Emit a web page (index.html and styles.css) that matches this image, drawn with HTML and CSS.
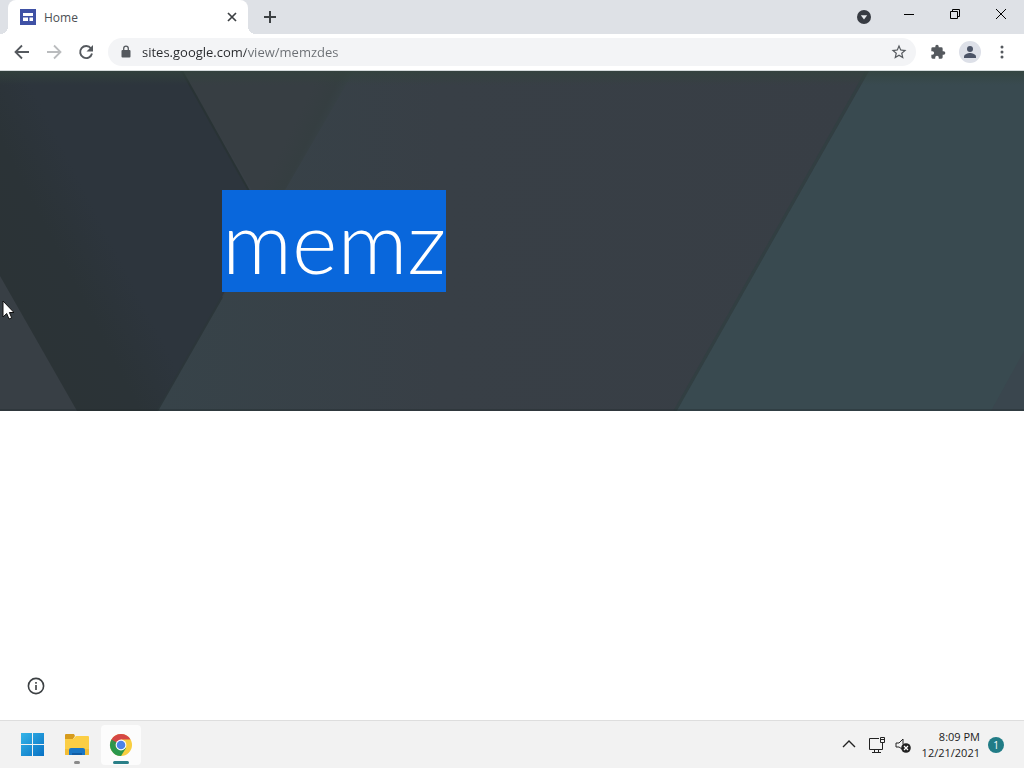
FILE: index.html
```html
<!DOCTYPE html>
<html lang="en">

<head>
    <meta charset="UTF-8">
    <meta name="viewport" content="width=device-width, initial-scale=1.0">
    <title>Home</title>
    <link rel="stylesheet" href="styles.css">
</head>

<body>
    <header class="browser">
        <div class="tab-strip">
            <div class="tab">
                <svg class="favicon" viewBox="0 0 16 16" width="16" height="16">
                    <rect width="16" height="16" fill="#3f51a5" />
                    <path d="M3 4h10v3H3zM3 8.500h5v3.500H3zM9.500 8.500H13v3.500H9.500z" fill="#fff" />
                </svg>
                <span class="tab-title">Home</span>
                <button class="tab-close" aria-label="Close tab">
                    <svg viewBox="0 0 16 16" width="16" height="16">
                        <path d="M4 4l8 8M12 4l-8 8" stroke="#3c4043" stroke-width="1.7" fill="none" />
                    </svg>
                </button>
            </div>
            <button class="new-tab" aria-label="New tab">
                <svg viewBox="0 0 16 16" width="16" height="16">
                    <path d="M8 2v12M2 8h12" stroke="#3c4043" stroke-width="2" fill="none" />
                </svg>
            </button>
            <button class="tab-search" aria-label="Search tabs">
                <svg viewBox="0 0 16 16" width="16" height="16">
                    <circle cx="8" cy="8" r="7" fill="#373b42" />
                    <path d="M4.8 6.2h6.4L8 10.6z" fill="#e8eaed" />
                </svg>
            </button>
            <div class="window-buttons">
                <button aria-label="Minimize">
                    <svg viewBox="0 0 12 12" width="12" height="12">
                        <path d="M1 6.5h10" stroke="#000" fill="none" />
                    </svg>
                </button>
                <button aria-label="Restore">
                    <svg viewBox="0 0 12 12" width="12" height="12">
                        <path d="M1.500 3.500h7v7h-7zM3.500 3.500v-2h7v7h-2" stroke="#000" fill="none" />
                    </svg>
                </button>
                <button aria-label="Close">
                    <svg viewBox="0 0 12 12" width="12" height="12">
                        <path d="M1 1l10 10M11 1L1 11" stroke="#000" fill="none" />
                    </svg>
                </button>
            </div>
        </div>

        <div class="toolbar">
            <button class="tool" aria-label="Back">
                <svg viewBox="0 0 16 16" width="16" height="16">
                    <path d="M15 8H2M8 1.500L1.500 8L8 14.500" stroke="#55595e" stroke-width="1.800" fill="none" />
                </svg>
            </button>
            <button class="tool" aria-label="Forward">
                <svg viewBox="0 0 16 16" width="16" height="16">
                    <path d="M1 8h13M8 1.500L14.500 8L8 14.500" stroke="#babcbe" stroke-width="1.800" fill="none" />
                </svg>
            </button>
            <button class="tool" aria-label="Reload">
                <svg viewBox="0 0 16 16" width="16" height="16">
                    <path d="M13 4.500A6 6 0 1 0 14 9.500" stroke="#55595e" stroke-width="1.900" fill="none" />
                    <path d="M15 1v6.500H8.500z" fill="#55595e" />
                </svg>
            </button>
            <div class="address-bar">
                <svg viewBox="0 0 12 14" width="12" height="14">
                    <rect x="1.500" y="5" width="9" height="7.500" rx="1" fill="#55595e" />
                    <path d="M3.700 6V3.500a2.300 2.300 0 0 1 4.600 0V6" stroke="#55595e" stroke-width="1.300" fill="none" />
                </svg>
                <input class="url" type="text" value="sites.google.com/view/memzdes" aria-label="Address">
                <button class="star" aria-label="Bookmark this page">
                    <svg viewBox="0 0 24 24" width="18" height="18">
                        <path d="M22 9.240l-7.190-.62L12 2 9.190 8.630 2 9.240l5.460 4.730L5.820 21 12 17.270 18.180 21l-1.630-7.030L22 9.240zM12 15.400l-3.760 2.270 1-4.280-3.320-2.880 4.380-.38L12 6.100l1.710 4.040 4.380.38-3.320 2.880 1 4.280L12 15.400z" fill="#55595e" />
                    </svg>
                </button>
            </div>
            <button class="tool" aria-label="Extensions">
                <svg viewBox="0 0 24 24" width="16" height="16">
                    <path d="M20.500 11H19V7a2 2 0 0 0-2-2h-4V3.500a2.500 2.500 0 0 0-5 0V5H4a2 2 0 0 0-2 2v3.800h1.500a2.700 2.700 0 0 1 0 5.400H2V20a2 2 0 0 0 2 2h3.800v-1.500a2.700 2.700 0 0 1 5.400 0V22H17a2 2 0 0 0 2-2v-4h1.500a2.500 2.500 0 0 0 0-5z" fill="#55595e" />
                </svg>
            </button>
            <button class="tool" aria-label="Profile">
                <svg viewBox="0 0 22 22" width="22" height="22">
                    <circle cx="11" cy="11" r="11" fill="#dde0e8" />
                    <circle cx="11" cy="8" r="3" fill="#4c5467" />
                    <path d="M5 17v-1.500c0-2.300 4-3.500 6-3.500s6 1.200 6 3.500V17z" fill="#4c5467" />
                </svg>
            </button>
            <button class="tool" aria-label="Menu">
                <svg viewBox="0 0 16 16" width="16" height="16">
                    <g fill="#55595e">
                        <circle cx="8" cy="3" r="1.500" />
                        <circle cx="8" cy="8" r="1.500" />
                        <circle cx="8" cy="13" r="1.500" />
                    </g>
                </svg>
            </button>
        </div>
    </header>

    <main class="page">
        <section class="hero">
            <svg class="hero-art" viewBox="0 0 1024 340" preserveAspectRatio="none" aria-hidden="true">
                <defs>
                    <linearGradient id="fold" gradientUnits="userSpaceOnUse" x1="20" y1="250" x2="125" y2="196">
                        <stop offset="0" stop-color="#2b3336" />
                        <stop offset="0.550" stop-color="#2b3337" />
                        <stop offset="1" stop-color="#2d353d" />
                    </linearGradient>
                    <linearGradient id="crease" gradientUnits="userSpaceOnUse" x1="295" y1="50" x2="325" y2="65">
                        <stop offset="0" stop-color="#373e43" />
                        <stop offset="0.600" stop-color="#353e41" />
                        <stop offset="1" stop-color="#374247" />
                    </linearGradient>
                    <linearGradient id="panel" x1="0" y1="0" x2="1" y2="0">
                        <stop offset="0" stop-color="#374349" />
                        <stop offset="0.400" stop-color="#383f46" />
                        <stop offset="1" stop-color="#383e45" />
                    </linearGradient>
                    <linearGradient id="top" x1="0" y1="0" x2="0" y2="1">
                        <stop offset="0" stop-color="#33443c" stop-opacity="0.700" />
                        <stop offset="1" stop-color="#33443c" stop-opacity="0" />
                    </linearGradient>
                </defs>
                <rect width="1024" height="340" fill="#383f45" />
                <path d="M157 340L354 0H869L676 340z" fill="url(#panel)" />
                <path d="M182 0H354L270 145H267z" fill="url(#crease)" />
                <path d="M0 0H182L262 145L222 226L157 340H77L0 205z" fill="url(#fold)" />
                <path d="M182 0L249 120" stroke="#293335" stroke-width="2" />
                <path d="M222 226L157 340" stroke="#2c363a" stroke-width="2" />
                <path d="M869 0H1024V340H676z" fill="#394a50" />
                <path d="M867 0L675 340" stroke="#323f42" stroke-width="3" />
                <path d="M1024 280V340H991z" fill="#3a464e" />
                <rect width="1024" height="14" fill="url(#top)" />
                <rect y="338" width="1024" height="2" fill="#20282a" opacity="0.350" />
            </svg>
            <div class="hero-content">
                <h1><span class="selected">memz</span></h1>
            </div>
        </section>
        <button class="info" aria-label="Page details">
            <svg viewBox="0 0 18 18" width="18" height="18">
                <circle cx="9" cy="9" r="7.600" stroke="#3c4043" stroke-width="1.600" fill="none" />
                <path d="M9 8v5M9 5v1.700" stroke="#3c4043" stroke-width="1.600" />
            </svg>
        </button>
    </main>

    <footer class="taskbar">
        <nav class="apps">
            <button class="app" aria-label="Start">
                <svg viewBox="0 0 24 24" width="24" height="24">
                    <defs>
                        <linearGradient id="win" x1="0" y1="0" x2="1" y2="1">
                            <stop offset="0" stop-color="#35b5e8" />
                            <stop offset="1" stop-color="#0871c4" />
                        </linearGradient>
                    </defs>
                    <path d="M0 0h11v11H0zM12 0h11v11H12zM0 12h11v11H0zM12 12h11v11H12z" fill="url(#win)" />
                </svg>
            </button>
            <button class="app running" aria-label="File Explorer">
                <svg viewBox="0 0 26 24" width="26" height="24">
                    <path d="M1 2a1 1 0 0 1 1-1h8l1 2-2 3H1z" fill="#d69b1d" />
                    <path d="M1 6h8l3-3h12a1 1 0 0 1 1 1v18H1z" fill="#fbce45" />
                    <path d="M1 16h24v5a1 1 0 0 1-1 1H2a1 1 0 0 1-1-1z" fill="#f3bd35" />
                    <path d="M5 22v-5a2 2 0 0 1 2-2h12a2 2 0 0 1 2 2v5z" fill="#1976c5" />
                    <path d="M8 20h10v2H8z" fill="#105ca4" />
                </svg>
            </button>
            <button class="app active" aria-label="Google Chrome">
                <svg viewBox="0 0 24 24" width="24" height="24">
                    <circle cx="12" cy="12" r="11" fill="#f8ce40" />
                    <path d="M12 12L2.470 6.500A11 11 0 0 0 12 23L17 14.900z" fill="#2b974c" />
                    <path d="M12 12L7.200 14.800 2.470 6.500A11 11 0 0 1 21.530 6.500H12z" fill="#d54745" />
                    <path d="M2.470 6.500L7.240 14.750 12 12z" fill="#2b974c" />
                    <circle cx="12" cy="12" r="5.400" fill="#fff" />
                    <circle cx="12" cy="12" r="4.300" fill="#4c83e8" />
                </svg>
            </button>
        </nav>
        <div class="tray">
            <button class="chevron" aria-label="Show hidden icons">
                <svg viewBox="0 0 14 18" width="14" height="18">
                    <path d="M1 11l6-6 6 6" stroke="#222" stroke-width="1.400" fill="none" />
                </svg>
            </button>
            <button aria-label="Network">
                <svg viewBox="0 0 18 18" width="18" height="18">
                    <path d="M11 2.500H1.500v11H14.500V7M6.500 14v2.500M10.500 14v2.500M4 16.500h9" stroke="#222" fill="none" />
                    <path d="M12.500 1.500h4v5h-4zM12.500 3.500h4" stroke="#222" fill="none" />
                </svg>
            </button>
            <button aria-label="Volume muted">
                <svg viewBox="0 0 18 18" width="18" height="18">
                    <path d="M8 13L5 11H2V7h3l4-4v5" stroke="#222" fill="none" />
                    <circle cx="12" cy="12" r="4.800" fill="#222" />
                    <path d="M10 10l4 4M14 10l-4 4" stroke="#fff" stroke-width="1.200" />
                </svg>
            </button>
            <button class="clock">
                <span>8:09 PM</span>
                <span>12/21/2021</span>
            </button>
            <button class="badge" aria-label="1 notification">1</button>
        </div>
    </footer>

    <svg class="cursor" viewBox="0 0 12 20" width="12" height="20" aria-hidden="true">
        <path d="M1 1v16l3.700-3.500L7 19l2.700-1.200L7.400 12.500H12z" fill="#fff" stroke="#111" stroke-width="1" />
    </svg>
</body>

</html>
```

FILE: styles.css
```css
* {
    box-sizing: border-box;
}

body {
    margin: 0;
    min-height: 100vh;
    display: flex;
    flex-direction: column;
    background: #fff;
    font-family: "Open Sans", "Noto Sans", sans-serif;
    font-size: 12px;
    color: #4c5054;
}

button {
    display: flex;
    align-items: center;
    justify-content: center;
    padding: 0;
    border: none;
    background: none;
    font: inherit;
    color: inherit;
    cursor: pointer;
}

svg {
    display: block;
    flex: none;
}

/* Browser window */
.tab-strip {
    display: flex;
    align-items: center;
    height: 34px;
    padding-left: 8px;
    background: #dee1e6;
}

.tab {
    position: relative;
    display: flex;
    align-items: center;
    gap: 8px;
    width: 240px;
    height: 34px;
    padding: 0 8px 0 12px;
    background: #fff;
    border-radius: 8px 8px 0 0;
}

/* flared corners at the foot of the tab */
.tab::before,
.tab::after {
    content: "";
    position: absolute;
    bottom: 0;
    width: 8px;
    height: 8px;
}

.tab::before {
    left: -8px;
    background: radial-gradient(circle at 0 0, transparent 8px, #fff 8px);
}

.tab::after {
    right: -8px;
    background: radial-gradient(circle at 100% 0, transparent 8px, #fff 8px);
}

.tab-title {
    flex: 1;
}

.new-tab {
    width: 28px;
    height: 28px;
    margin-left: 8px;
}

.tab-search {
    width: 28px;
    height: 28px;
    margin-left: auto;
    margin-right: 8px;
}

.window-buttons {
    display: flex;
    align-self: stretch;
}

.window-buttons button {
    width: 46px;
    height: 28px;
}

.toolbar {
    display: flex;
    align-items: center;
    gap: 4px;
    height: 37px;
    padding: 0 8px;
    border-bottom: 1px solid #d5dbdc;
}

.tool {
    width: 28px;
    height: 28px;
}

.address-bar {
    flex: 1;
    display: flex;
    align-items: center;
    gap: 10px;
    height: 28px;
    margin: 0 4px;
    padding: 0 8px 0 12px;
    background: #f3f4f6;
    border-radius: 14px;
}

/* the host name is darker than the path */
.url {
    flex: 1;
    min-width: 0;
    padding: 0;
    border: none;
    outline: none;
    font: inherit;
    font-size: 13px;
    line-height: 20px;
    background: linear-gradient(90deg, #27292c 104px, #6a6e73 104px);
    background-clip: text;
    -webkit-background-clip: text;
    color: transparent;
}

/* Site */
.page {
    flex: 1;
    display: flex;
    flex-direction: column;
    justify-content: space-between;
}

.hero {
    position: relative;
    display: flex;
    align-items: center;
    min-height: 340px;
    background: #383f45;
}

.hero-art {
    position: absolute;
    inset: 0;
    width: 100%;
    height: 100%;
}

.hero-content {
    position: relative;
    width: 100%;
    max-width: 580px;
    margin: 0 auto;
}

h1 {
    display: flex;
    margin: 0;
    font-family: Lato, sans-serif;
    font-size: 87px;
    font-weight: 300;
    line-height: 102px;
    color: #fff;
}

.selected {
    background: #0967dc;
}

.info {
    width: 24px;
    height: 24px;
    margin: 0 0 22px 24px;
}

/* Taskbar */
.taskbar {
    display: flex;
    align-items: center;
    justify-content: space-between;
    height: 48px;
    padding: 0 20px 0 13px;
    background: #f2f2f2;
    border-top: 1px solid #dedede;
}

.apps {
    display: flex;
    gap: 4px;
}

.app {
    position: relative;
    width: 40px;
    height: 40px;
    border-radius: 4px;
}

.app.active {
    background: #fcfcfc;
}

.app.running::after,
.app.active::after {
    content: "";
    position: absolute;
    bottom: 1px;
    width: 6px;
    height: 3px;
    border-radius: 2px;
    background: #8a8a8a;
}

.app.active::after {
    width: 16px;
    background: #2a7f88;
}

.tray {
    display: flex;
    align-items: center;
    gap: 8px;
    color: #1b1b1b;
}

.chevron {
    margin-right: 4px;
}

.clock {
    flex-direction: column;
    align-items: flex-end;
    margin-left: 2px;
    font-size: 11px;
    line-height: 16px;
}

.badge {
    width: 16px;
    height: 16px;
    border-radius: 50%;
    background: #217c86;
    color: #fff;
    font-size: 10px;
}

/* Mouse pointer */
.cursor {
    position: absolute;
    left: 2px;
    top: 300px;
}
```
